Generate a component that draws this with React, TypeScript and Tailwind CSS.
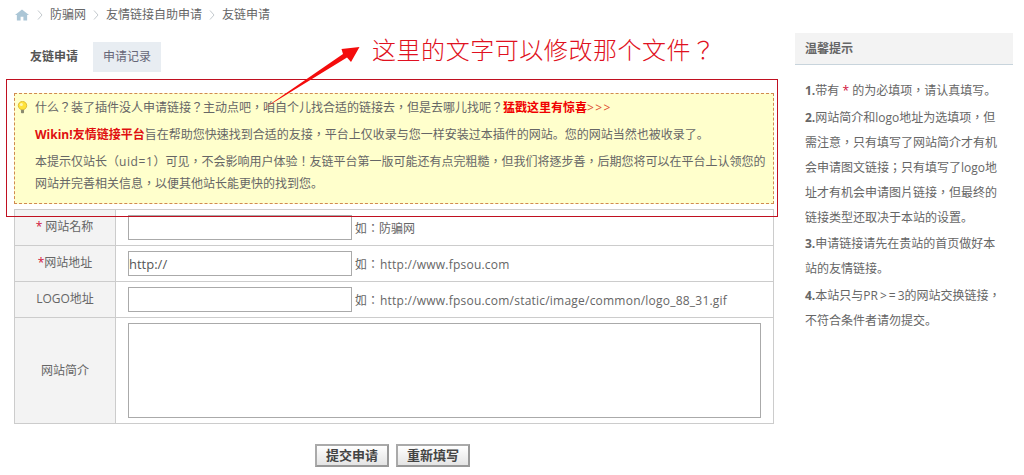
import type { ReactNode } from "react";

function Chevron() {
  return (
    <svg width="6" height="12" viewBox="0 0 6 12" className="mx-[7px] shrink-0" fill="none" stroke="#c4cace" strokeWidth="1">
      <path d="M1 1.5l4 4.5-4 4.5" />
    </svg>
  );
}

function Dot() {
  return <span className="inline-block leading-[0] font-['Noto_Sans_CJK_SC',sans-serif]">。</span>;
}

function Row({ label, value, hint }: { label: ReactNode; value?: string; hint: ReactNode }) {
  return (
    <div className="flex h-[36px] border-b border-[#ccc]">
      <div className="w-[101px] shrink-0 bg-[#f3f3f3] border-r border-[#ccc] flex items-center justify-center pb-[2px]">{label}</div>
      <div className="flex items-center pl-[12px] gap-[3px]">
        <input readOnly defaultValue={value} className="w-[224px] h-[25px] border border-[#aaa] bg-white px-0 text-[13px] text-[#555] outline-none" />
        <span className="mt-[2px]">{hint}</span>
      </div>
    </div>
  );
}

function Latin({ children }: { children: ReactNode }) {
  return <span className="ml-[1px] tracking-[0.22px]">{children}</span>;
}

export default function App() {
  return (
    <div className="relative w-[1024px] h-[475px] overflow-hidden bg-white text-[12px] text-[#666] [text-spacing-trim:space-all] font-['Open_Sans','Noto_Sans_CJK_TC',sans-serif]">
      <div className="flex">
        <main className="ml-[14px] w-[760px] shrink-0">
          <nav className="flex items-center h-[30px] text-[#666]">
            <svg width="14" height="12" viewBox="0 0 15 12" className="mr-[1px] ml-[1px]" fill="#abc6d6">
              <path d="M7.5 0L0 6h2v6h4V8h3v4h4V6h2z" />
            </svg>
            <Chevron />
            <span>防骗网</span>
            <Chevron />
            <span>友情链接自助申请</span>
            <Chevron />
            <span>友链申请</span>
          </nav>
          <div className="flex mt-[12px] h-[30px] items-center">
            <div className="w-[79px] pl-[16px] font-bold text-[#555]">友链申请</div>
            <div className="w-[68px] h-[30px] bg-[#e8edf2] flex items-center justify-center text-[#667]">申请记录</div>
          </div>
          <div className="mt-[21px] h-[111px] border border-dashed border-[#d08a50] bg-[#ffffcc] pl-[20px] pr-[4px] pt-[3px] relative">
            <svg width="11" height="13" viewBox="0 0 14 17" className="absolute left-[2px] top-[7px]">
              <circle cx="7" cy="6" r="5.5" fill="#ffe23c" stroke="#d8b020" strokeWidth="1" />
              <circle cx="5.5" cy="4.5" r="2" fill="#fff7b0" />
              <rect x="5" y="11.5" width="4" height="4.5" rx="1" fill="#8a8a70" />
            </svg>
            <p className="leading-[22px] mb-[5px] whitespace-nowrap">
              什么？装了插件没人申请链接？主动点吧，咱自个儿找合适的链接去，但是去哪儿找呢？<b className="text-[#f00000]">猛戳这里有惊喜</b><span className="text-[#e05030] tracking-[1.4px]">&gt;&gt;&gt;</span>
            </p>
            <p className="leading-[22px] mb-[5px] whitespace-nowrap">
              <b className="text-[#e01010]">Wikin!友情链接平台</b>旨在帮助您快速找到合适的友接，平台上仅收录与您一样安装过本插件的网站<Dot />您的网站当然也被收录了<Dot />
            </p>
            <p className="leading-[22px]">
              本提示仅站长（<span className="tracking-[0.6px]">uid=1</span>）可见，不会影响用户体验！友链平台第一版可能还有点完粗糙，但我们将逐步善，后期您将可以在平台上认领您的<br />网站并完善相关信息，以便其他站长能更快的找到您<Dot />
            </p>
          </div>
          <div className="mt-[5px] border border-[#ccc]">
            <Row label={<span className="ml-[-1px]"><span className="text-[#d0103a]">*</span> 网站名称</span>} hint="如：防骗网" />
            <Row label={<span><span className="text-[#d0103a]">*</span>网站地址</span>} value="http://" hint={<>如：<Latin>http://www.fpsou.com</Latin></>} />
            <Row label="LOGO地址" hint={<>如：<Latin>http://www.fpsou.com/static/image/common/logo_88_31.gif</Latin></>} />
            <div className="flex h-[105px]">
              <div className="w-[101px] shrink-0 bg-[#f3f3f3] border-r border-[#ccc] flex items-center justify-center">网站简介</div>
              <div className="flex items-center pl-[12px]">
                <textarea readOnly className="w-[633px] h-[95px] border border-[#aaa] bg-white outline-none resize-none" />
              </div>
            </div>
          </div>
          <div className="flex mt-[20px] ml-[301px] gap-[7px]">
            <button className="w-[74px] h-[23px] border-2 border-t-[#aaa] border-l-[#aaa] border-r-[#999] border-b-[#999] bg-gradient-to-b from-white to-[#e4e4e4] text-[13px] font-bold text-[#444] flex items-center justify-center">提交申请</button>
            <button className="w-[74px] h-[23px] border-2 border-t-[#aaa] border-l-[#aaa] border-r-[#999] border-b-[#999] bg-gradient-to-b from-white to-[#e4e4e4] text-[13px] font-bold text-[#444] flex items-center justify-center">重新填写</button>
          </div>
        </main>
        <aside className="ml-[21px] w-[218px] mt-[33px] shrink-0">
          <div className="h-[32px] bg-[#f3f3f3] border-b border-[#c8d4dc] flex items-center pl-[10px] font-bold">温馨提示</div>
          <div className="pl-[10px] pr-[9px] pt-[13px] leading-[25px]">
            <p className="mb-[1.5px]"><b>1.</b>带有 <span className="text-[#d0103a]">*</span> 的为必填项，请认真填写<Dot /></p>
            <p className="mb-[1.5px]"><b>2.</b>网站简介和logo地址为选填项，但需注意，只有填写了网站简介才有机会申请图文链接；只有填写了logo地址才有机会申请图片链接，但最终的链接类型还取决于本站的设置<Dot /></p>
            <p className="mb-[1.5px]"><b>3.</b>申请链接请先在贵站的首页做好本站的友情链接<Dot /></p>
            <p><b>4.</b>本站只与PR<span className="tracking-[2px] ml-[2px]">&gt;=</span>3的网站交换链接，不符合条件者请勿提交<Dot /></p>
          </div>
        </aside>
      </div>

      <div className="absolute left-[6px] top-[79px] w-[772px] h-[138px] border border-[#c01020] pointer-events-none" />
      <svg className="absolute left-[260px] top-[35px] pointer-events-none" width="110" height="75" viewBox="0 0 110 75">
        <path d="M3 74L83 19 81.5 14 99.5 12 91 27 87 22.5z" fill="#f40c0c" />
      </svg>
      <div className="absolute left-[372px] top-[32px] text-[24px] leading-[34px] tracking-[0.55px] text-[#e01020] font-['Noto_Sans_CJK_TC',sans-serif] font-light whitespace-nowrap">这里的文字可以修改那个文件？</div>
    </div>
  );
}
